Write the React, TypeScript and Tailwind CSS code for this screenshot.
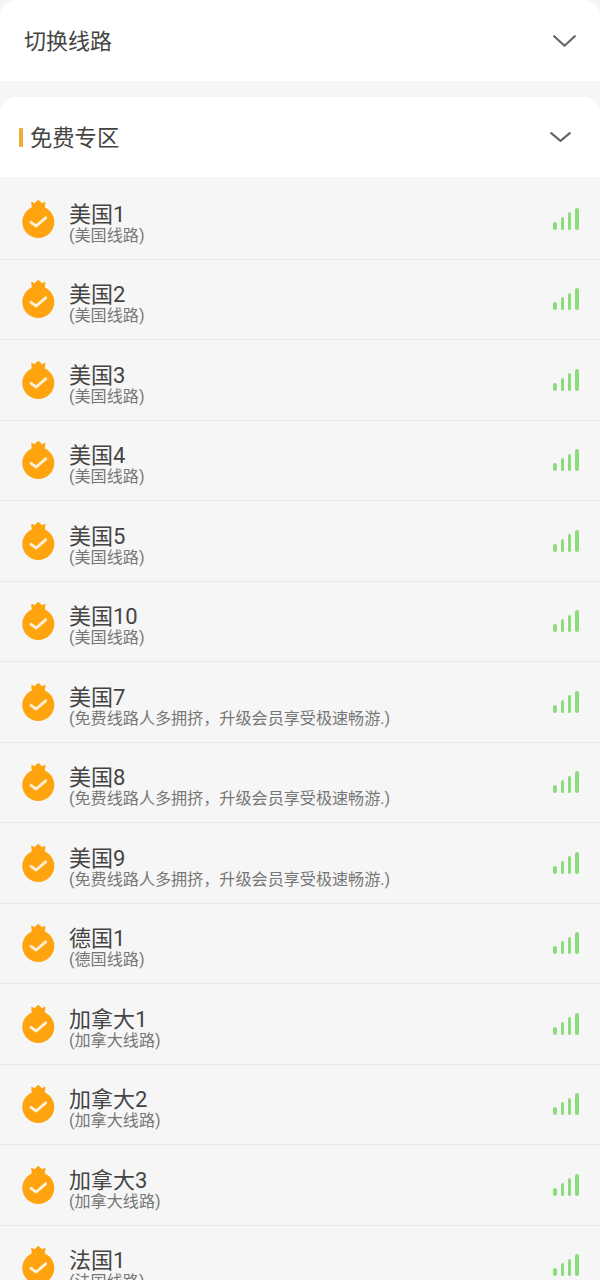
function Medal() {
  return (
    <svg width="34" height="40" viewBox="0 0 34 40" className="shrink-0">
      <path d="M10.8 9 L10.2 3.4 Q10.4 2.4 11.3 2.9 L13.6 4.2 L16.4 1.4 Q17.3 0.8 18.2 1.4 L21 4.2 L23.3 2.9 Q24.2 2.4 24.4 3.4 L23.8 9 Z" fill="#ffa40f" />
      <circle cx="17.3" cy="23" r="16" fill="#ffa40f" />
      <path d="M10 23.4 L15.2 27 L24.6 18.8" fill="none" stroke="#fff0d6" strokeWidth="2.9" strokeLinecap="round" strokeLinejoin="round" />
    </svg>
  );
}

function Signal() {
  return (
    <div className="flex items-end gap-[3.6px] h-[22px]">
      <div className="w-[3.6px] h-[8px] rounded-[2px] bg-[#8cdc7c]" />
      <div className="w-[3.6px] h-[13px] rounded-[2px] bg-[#8cdc7c]" />
      <div className="w-[3.6px] h-[17.5px] rounded-[2px] bg-[#8cdc7c]" />
      <div className="w-[3.6px] h-[22px] rounded-[2px] bg-[#8cdc7c]" />
    </div>
  );
}

function Chevron({ w, h }: { w: number; h: number }) {
  return (
    <svg width={w} height={h} viewBox={`0 0 ${w} ${h}`} fill="none">
      <path d={`M1.2 1.2 L${w / 2} ${h - 1.2} L${w - 1.2} 1.2`} stroke="#666666" strokeWidth="2.2" strokeLinecap="round" strokeLinejoin="round" />
    </svg>
  );
}

const crowded = "(免费线路人多拥挤\uFF0C升级会员享受极速畅游.)";
const rows: [string, string][] = [
  ["美国1", "(美国线路)"],
  ["美国2", "(美国线路)"],
  ["美国3", "(美国线路)"],
  ["美国4", "(美国线路)"],
  ["美国5", "(美国线路)"],
  ["美国10", "(美国线路)"],
  ["美国7", crowded],
  ["美国8", crowded],
  ["美国9", crowded],
  ["德国1", "(德国线路)"],
  ["加拿大1", "(加拿大线路)"],
  ["加拿大2", "(加拿大线路)"],
  ["加拿大3", "(加拿大线路)"],
  ["法国1", "(法国线路)"],
];

export default function App() {
  return (
    <div
      className="w-[600px] h-[1280px] overflow-hidden bg-[#f6f6f6]"
      style={{ fontFamily: '"Roboto", "Noto Sans CJK SC", sans-serif' }}
    >
      <div className="h-[81px] bg-white rounded-t-[16px] flex items-center justify-between pl-[24px] pr-[24px]">
        <span className="text-[22px] leading-[30px] mt-[2px] text-[#444444]">切换线路</span>
        <Chevron w={23} h={12} />
      </div>
      <div className="mt-[16px] h-[80px] bg-white rounded-t-[16px] flex items-center justify-between pl-[19px] pr-[29px]">
        <div className="flex items-center gap-[7px]">
          <div className="w-[4px] h-[19px] rounded-[1px] bg-[#ecae35]" />
          <span className="text-[22.3px] leading-[30px] mt-[1px] text-[#444444]">免费专区</span>
        </div>
        <Chevron w={21} h={10} />
      </div>
      <div className="flex flex-col mt-[2px]">
        {rows.map(([title, sub], i) => (
          <div
            key={i}
            className="h-[80.5px] shrink-0 border-b border-[#e8e8e8] flex items-center pl-[21px] pr-[21.5px]"
          >
            <Medal />
            <div className="ml-[14px] flex-1 flex flex-col mt-[8px]">
              <span className="text-[22px] leading-[26px] text-[#444444]">{title}</span>
              <span className="text-[16.1px] leading-[16px] text-[#777777]">{sub}</span>
            </div>
            <Signal />
          </div>
        ))}
      </div>
    </div>
  );
}
